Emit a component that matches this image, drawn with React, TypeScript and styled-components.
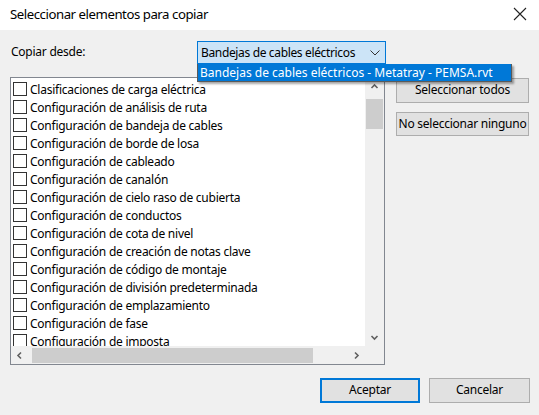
import React from "react";
import styled, { createGlobalStyle } from "styled-components";

const Global = createGlobalStyle`
  html, body { margin: 0; padding: 0; }
  body { width: 539px; height: 415px; overflow: hidden; font-family: "Noto Sans", "Open Sans", sans-serif; font-size: 12px; color: #000; }
`;

const Dialog = styled.div`
  width: 539px;
  height: 415px;
  display: flex;
  flex-direction: column;
  background: #f0f0f0;
  position: relative;
`;

const TitleBar = styled.div`
  height: 30px;
  background: #fff;
  display: flex;
  align-items: center;
  justify-content: space-between;
  padding: 0 10px 2px 10px;
  box-sizing: border-box;
`;

const Title = styled.div`
  font-size: 13.2px;
  letter-spacing: -0.45px;
`;

const Close = styled.div`
  width: 16px;
  height: 16px;
  margin-right: 1px;
  display: flex;
`;

const Body = styled.div`
  flex: 1;
  display: flex;
  flex-direction: column;
  padding: 11px 9px 0 10px;
`;

const FromRow = styled.div`
  display: grid;
  grid-template-columns: 187px 189px;
  align-items: center;
  height: 23px;
  position: relative;
`;

const Label = styled.div`
  padding-left: 1px;
  letter-spacing: -0.25px;
  margin-top: -2px;
`;

const Combo = styled.div`
  height: 23px;
  box-sizing: border-box;
  border: 1px solid #0078d7;
  background: #cce4f7;
  display: flex;
  align-items: center;
  justify-content: space-between;
  padding: 0 5px 0 3px;
  letter-spacing: -0.35px;
`;

const Popup = styled.div`
  position: absolute;
  left: 187px;
  top: 23px;
  width: 315px;
  height: 18px;
  box-sizing: border-box;
  background: #0078d7;
  color: #fff;
  border: 1px solid #5a5a5a;
  border-top: none;
  padding-left: 2px;
  display: flex;
  align-items: center;
  letter-spacing: 0px;
  box-shadow: 2px 2px 2px rgba(0, 0, 0, 0.35);
  z-index: 5;
  white-space: nowrap;
`;

const Main = styled.div`
  display: grid;
  grid-template-columns: 375px 1fr;
  column-gap: 11px;
  margin-top: 13px;
`;

const ListBox = styled.div`
  height: 288px;
  box-sizing: border-box;
  border: 1px solid #828790;
  background: #fff;
  display: grid;
  grid-template-columns: 1fr 19px;
  grid-template-rows: 1fr 18px;
`;

const Items = styled.div`
  overflow: hidden;
  padding-top: 2px;
`;

const Item = styled.div`
  height: 18px;
  display: flex;
  align-items: center;
  white-space: nowrap;
  letter-spacing: -0.25px;
`;

const Check = styled.span`
  width: 14px;
  height: 14px;
  box-sizing: border-box;
  border: 1px solid #333;
  background: #fff;
  margin: 0 3px 0 2px;
  flex: none;
`;

const VBar = styled.div`
  background: #f0f0f0;
  display: flex;
  flex-direction: column;
  align-items: center;
  padding: 0 1px;
`;

const HBar = styled.div`
  background: #f0f0f0;
  display: flex;
  align-items: center;
`;

const Corner = styled.div`
  background: #f0f0f0;
`;

const Arrow = styled.div`
  width: 17px;
  height: 17px;
  display: flex;
  align-items: center;
  justify-content: center;
  flex: none;
`;

const VThumb = styled.div`
  width: 17px;
  height: 30px;
  background: #cdcdcd;
  margin-top: 4px;
`;

const VFill = styled.div`
  flex: 1;
`;

const HThumb = styled.div`
  width: 281px;
  height: 15px;
  background: #cdcdcd;
  margin-left: 4px;
`;

const SideButtons = styled.div`
  display: flex;
  flex-direction: column;
  gap: 9px;
  padding-top: 1px;
`;

const Button = styled.button<{ $default?: boolean; $w?: number; $h?: number }>`
  width: ${(p) => p.$w ?? 133}px;
  height: ${(p) => p.$h ?? 24}px;
  box-sizing: border-box;
  background: #e1e1e1;
  border: ${(p) => (p.$default ? "2px solid #0078d7" : "1px solid #adadad")};
  font-family: inherit;
  font-size: 12px;
  letter-spacing: -0.25px;
  color: #000;
  padding: 0 0 2px 0;
  margin: 0;
  display: flex;
  align-items: center;
  justify-content: center;
  white-space: nowrap;
`;

const Footer = styled.div`
  display: flex;
  justify-content: flex-end;
  gap: 9px;
  margin-top: 13px;
`;

const Chevron = ({ dir, size = 9, color = "#606060" }: { dir: "up" | "down" | "left" | "right"; size?: number; color?: string }) => {
  const paths: Record<string, string> = {
    up: "M1.5 6 L4.5 3 L7.5 6",
    down: "M1.5 3 L4.5 6 L7.5 3",
    left: "M6 1.5 L3 4.5 L6 7.5",
    right: "M3 1.5 L6 4.5 L3 7.5",
  };
  return (
    <svg width={size} height={size} viewBox="0 0 9 9">
      <path d={paths[dir]} fill="none" stroke={color} strokeWidth="1.6" />
    </svg>
  );
};

const items = [
  "Clasificaciones de carga eléctrica",
  "Configuración de análisis de ruta",
  "Configuración de bandeja de cables",
  "Configuración de borde de losa",
  "Configuración de cableado",
  "Configuración de canalón",
  "Configuración de cielo raso de cubierta",
  "Configuración de conductos",
  "Configuración de cota de nivel",
  "Configuración de creación de notas clave",
  "Configuración de código de montaje",
  "Configuración de división predeterminada",
  "Configuración de emplazamiento",
  "Configuración de fase",
  "Configuración de imposta",
];

export default function App() {
  return (
    <>
      <Global />
      <Dialog>
        <TitleBar>
          <Title>Seleccionar elementos para copiar</Title>
          <Close>
            <svg width="16" height="16" viewBox="0 0 16 16">
              <path d="M2 2 L14 14 M14 2 L2 14" stroke="#222" strokeWidth="1.1" />
            </svg>
          </Close>
        </TitleBar>
        <Body>
          <FromRow>
            <Label>Copiar desde:</Label>
            <Combo>
              <span>Bandejas de cables eléctricos</span>
              <svg width="10" height="6" viewBox="0 0 10 6">
                <path d="M0.5 0.5 L5 5 L9.5 0.5" fill="none" stroke="#333" strokeWidth="1" />
              </svg>
            </Combo>
            <Popup>Bandejas de cables eléctricos - Metatray - PEMSA.rvt</Popup>
          </FromRow>
          <Main>
            <ListBox>
              <Items>
                {items.map((t) => (
                  <Item key={t}>
                    <Check />
                    {t}
                  </Item>
                ))}
              </Items>
              <VBar>
                <Arrow><Chevron dir="up" /></Arrow>
                <VThumb />
                <VFill />
                <Arrow><Chevron dir="down" /></Arrow>
              </VBar>
              <HBar>
                <Arrow><Chevron dir="left" /></Arrow>
                <HThumb />
                <VFill />
                <Arrow><Chevron dir="right" /></Arrow>
              </HBar>
              <Corner />
            </ListBox>
            <SideButtons>
              <Button $w={133} $h={25}>Seleccionar todos</Button>
              <Button $w={133}>No seleccionar ninguno</Button>
            </SideButtons>
          </Main>
          <Footer>
            <Button $default $w={100} $h={25}>Aceptar</Button>
            <Button $w={101} $h={25}>Cancelar</Button>
          </Footer>
        </Body>
      </Dialog>
    </>
  );
}
